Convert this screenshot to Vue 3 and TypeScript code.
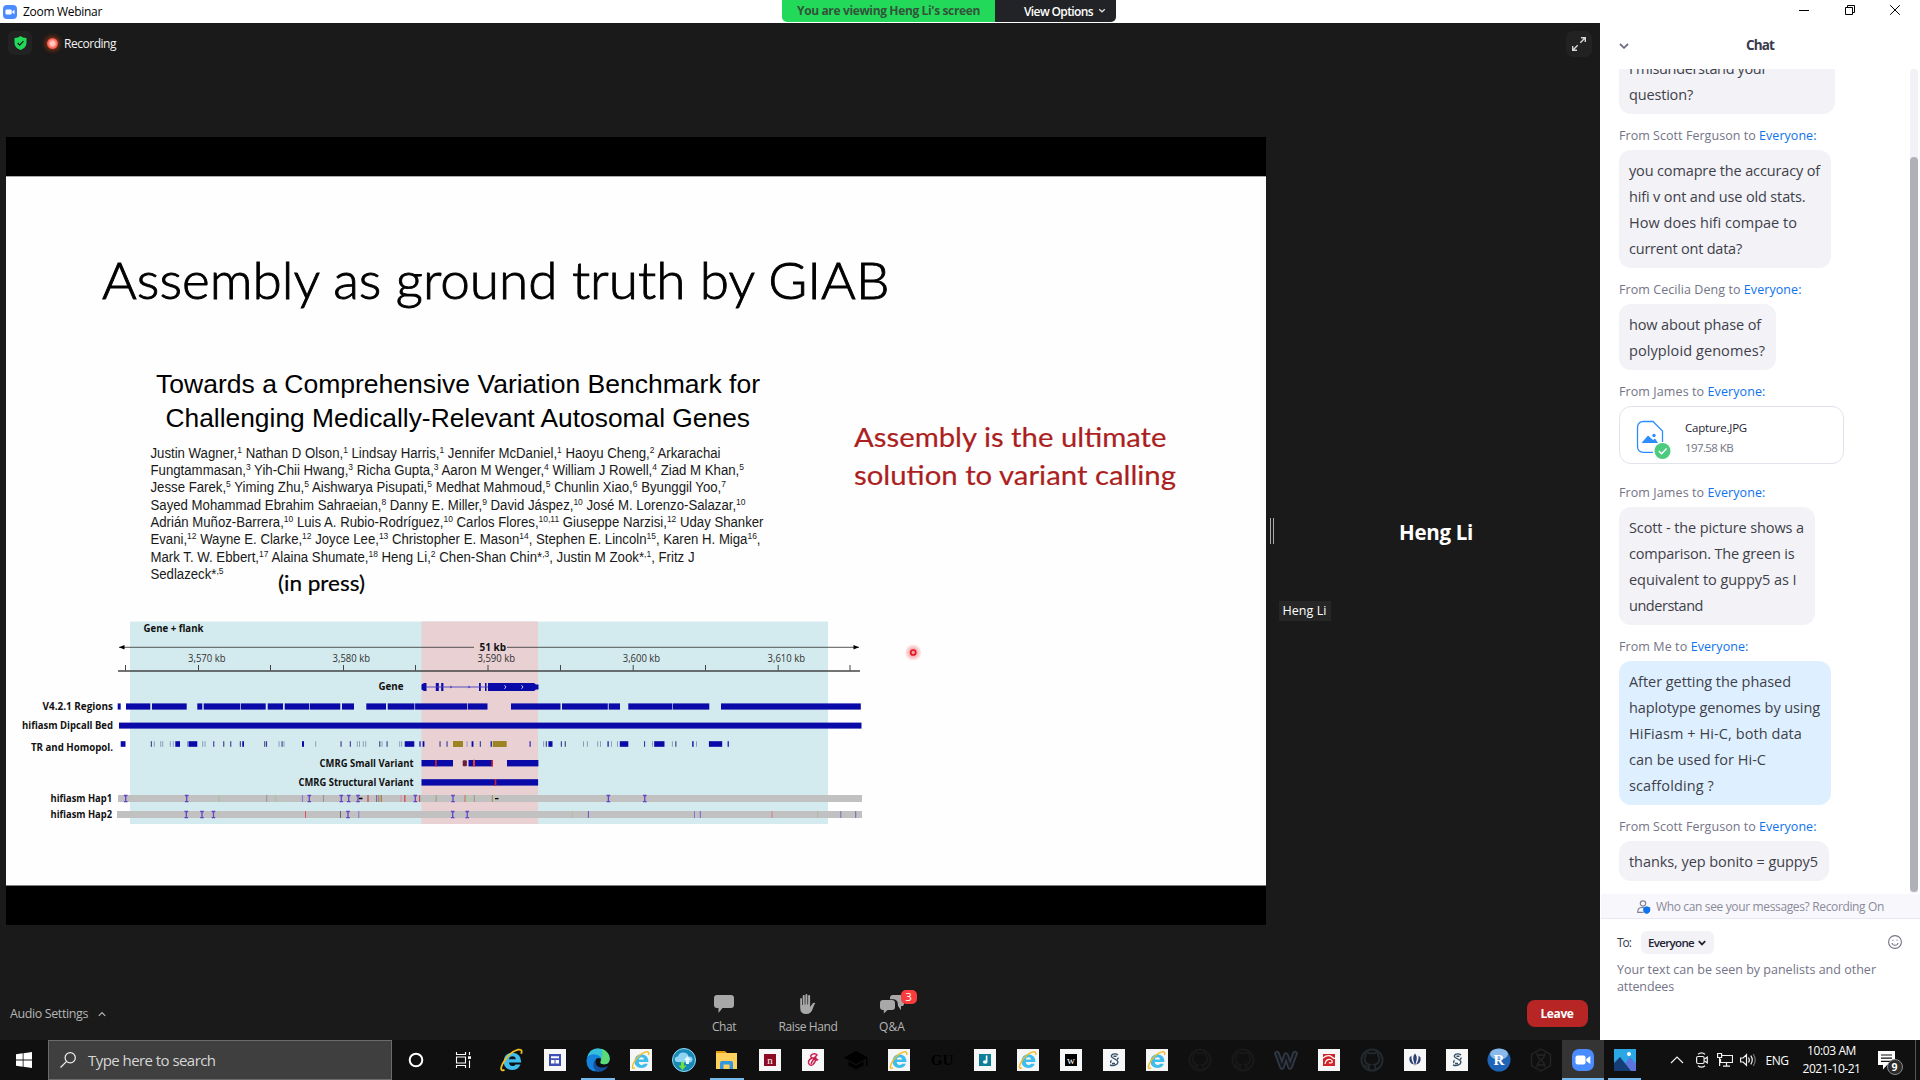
<script setup lang="ts">
interface Message {
  from: string
  fromWidth: number
  lines?: [string, number][]
  width: number
  mine?: boolean
  file?: { name: string; size: string }
}

type Seg = [number, number]

/* Spreads a text run over an exact advance width through letter spacing. */
const vFit = {
  mounted(el: HTMLElement, binding: { value: number }) {
    const count = (el.textContent ?? '').trim().length
    const natural = el.getBoundingClientRect().width
    el.style.letterSpacing = `${(binding.value - natural) / count}px`
  },
}

const messages: Message[] = [
  { from: '', fromWidth: 0, width: 216, lines: [['I misunderstand your', 138], ['question?', 64]] },
  {
    from: 'Scott Ferguson', fromWidth: 197.5, width: 212,
    lines: [['you comapre the accuracy of', 191], ['hifi v ont and use old stats.', 176.5], ['How does hifi compae to', 168], ['current ont data?', 113]],
  },
  { from: 'Cecilia Deng', fromWidth: 182.5, width: 157, lines: [['how about phase of', 132], ['polyploid genomes?', 136]] },
  { from: 'James', fromWidth: 146.5, width: 225, file: { name: 'Capture.JPG', size: '197.58 KB' } },
  {
    from: 'James', fromWidth: 146.5, width: 196,
    lines: [['Scott - the picture shows a', 175], ['comparison. The green is', 165.5], ['equivalent to guppy5 as I', 167.5], ['understand', 74]],
  },
  {
    from: 'Me', fromWidth: 129.5, width: 212, mine: true,
    lines: [['After getting the phased', 162], ['haplotype genomes by using', 191], ['HiFiasm + Hi-C, both data', 173], ['can be used for Hi-C', 137], ['scaffolding ?', 85]],
  },
  { from: 'Scott Ferguson', fromWidth: 197.5, width: 210, lines: [['thanks, yep bonito = guppy5', 189]] },
]

/* Author lines: "^…^" marks a superscript. */
const authors: { y: number; w: number; t: string }[] = [
  { y: 457.7, w: 570, t: 'Justin Wagner,^1^ Nathan D Olson,^1^ Lindsay Harris,^1^ Jennifer McDaniel,^1^ Haoyu Cheng,^2^ Arkarachai' },
  { y: 475, w: 593.5, t: 'Fungtammasan,^3^ Yih-Chii Hwang,^3^ Richa Gupta,^3^ Aaron M Wenger,^4^ William J Rowell,^4^ Ziad M Khan,^5^' },
  { y: 492.3, w: 575.5, t: 'Jesse Farek,^5^ Yiming Zhu,^5^ Aishwarya Pisupati,^5^ Medhat Mahmoud,^5^ Chunlin Xiao,^6^ Byunggil Yoo,^7^' },
  { y: 509.5, w: 595, t: 'Sayed Mohammad Ebrahim Sahraeian,^8^ Danny E. Miller,^9^ David Jáspez,^10^ José M. Lorenzo-Salazar,^10^' },
  { y: 527, w: 613, t: 'Adrián Muñoz-Barrera,^10^ Luis A. Rubio-Rodríguez,^10^ Carlos Flores,^10,11^ Giuseppe Narzisi,^12^ Uday Shanker' },
  { y: 544.3, w: 610, t: 'Evani,^12^ Wayne E. Clarke,^12^ Joyce Lee,^13^ Christopher E. Mason^14^, Stephen E. Lincoln^15^, Karen H. Miga^16^,' },
  { y: 561.7, w: 544, t: 'Mark T. W. Ebbert,^17^ Alaina Shumate,^18^ Heng Li,^2^ Chen-Shan Chin*^,3^, Justin M Zook*^,1^, Fritz J' },
  { y: 578.8, w: 73, t: 'Sedlazeck*^,5^' },
]

interface Run { text: string; sup: boolean; dy: number }
function runs(t: string): Run[] {
  let previous = false
  return t.split('^').map((text, i) => {
    const sup = i % 2 === 1
    const dy = sup === previous ? 0 : sup ? -5 : 5
    previous = sup
    return { text, sup, dy }
  }).filter((r) => r.text !== '')
}

const trackLabels: [string, number, number, number][] = [
  ['Gene + flank', 143.5, 632, 60],
  ['51 kb', 479.5, 650.6, 26.5],
  ['Gene', 378.5, 690, 25],
  ['V4.2.1 Regions', 42.5, 709.8, 70.5],
  ['hifiasm Dipcall Bed', 22, 728.8, 91],
  ['TR and Homopol.', 31, 751, 82],
  ['CMRG Small Variant', 319.5, 767.3, 94],
  ['CMRG Structural Variant', 298.5, 786.4, 115],
  ['hifiasm Hap1', 50.5, 801.6, 61.5],
  ['hifiasm Hap2', 50.5, 818, 61.5],
]
const scaleLabels: [string, number][] = [['3,570 kb', 188], ['3,580 kb', 332.5], ['3,590 kb', 477.5], ['3,600 kb', 622.7], ['3,610 kb', 767.5]]
const ticks = [125.5, 198.5, 270.5, 343.5, 415.5, 488, 560.5, 633.2, 705.5, 778.2, 850]

const regions: Seg[] = [
  [117.7, 120.7], [126, 150.3], [152, 186.7], [197.3, 202.3], [203.7, 240.1], [240.8, 265.7], [267.7, 283], [284.7, 309],
  [309.7, 340.3], [342, 354], [366.3, 386], [387.7, 414.4], [415.1, 467.1], [467.8, 487.5], [511, 560.5], [562, 607.8],
  [608.7, 620], [628.3, 672.3], [672.9, 709.3], [721, 860.8],
]
const repeats: Seg[] = [
  [120.7, 125.5], [175.3, 180], [188.5, 197.3], [242.3, 244], [302, 304], [404.7, 414.3], [419.4, 420.6], [422.6, 424.4],
  [471.6, 473.4], [529.6, 530.6], [548.4, 552.5], [619.8, 628.3], [654.2, 664.5], [692.2, 693.6], [708.9, 722.2], [727.6, 728.8],
  [490.6, 491.8], [607.5, 608.7],
]
const thinRepeats = [
  151.3, 240.3, 213.7, 264.7, 266.5, 350.3, 379.7, 440, 447, 480.3, 546.3, 561.3, 565.2, 644.5, 675.8, 223.7, 230.7, 387, 341, 282,
]
const faintRepeats = [
  154.3, 160.7, 162.7, 170.3, 173.3, 187.5, 202.7, 205, 279, 284, 315.7, 357.3, 359.5, 363.3, 365.7, 382, 399.7, 401.7,
  467, 543.6, 583.5, 587.4, 597.7, 600.5, 611.5, 617.5, 652.5, 672.4, 696.5,
]
const gold: Seg[] = [[453, 463], [492.8, 506.7]]
const smallVariant: Seg[] = [[421.5, 453], [468.5, 492.3], [507, 538.4]]
const insertions1 = [125.7, 186.7, 309.3, 341.3, 348.7, 358, 415.3, 453, 608.4, 644.8]
const insertions2 = [186.3, 202, 213.5, 348, 452.7, 467.2]
const marks1: [number, string][] = [
  [219, '#a5c39c'], [266.7, '#9a9a9a'], [275.5, '#a5c39c'], [302.5, '#8d7bd0'], [323.5, '#969696'], [368, '#d23c50'],
  [376.6, '#9558aa'], [378.8, '#7c9661'], [381.3, '#ad7547'], [401, '#dd91a8'], [404.8, '#d23c50'], [419.6, '#d2505b'],
  [436.2, '#a6a67f'], [465, '#d9717f'], [466.8, '#95df82'], [474.4, '#a1a180'], [492.4, '#aa9b4c'],
]
const marks2: [number, string][] = [
  [218.8, '#acc8a1'], [305.5, '#db5365'], [340.5, '#666'], [358.8, '#8176cf'], [572.5, '#aec0a2'], [588.4, '#6751c4'],
  [694.5, '#8176cf'], [700.3, '#7666c9'], [772, '#d77c8c'], [817.7, '#a9b9a6'], [840.8, '#7d68b9'], [855.7, '#7766b5'],
]

interface Task { kind: string; glyph?: string; fill?: string; state?: 'open' | 'active' }
const tasks: Task[] = [
  { kind: 'ie' }, { kind: 'news' }, { kind: 'edge', state: 'open' }, { kind: 'ie-page' }, { kind: 'cloud' }, { kind: 'folder', state: 'open' },
  { kind: 'letter', glyph: 'n', fill: '#8c0b22' }, { kind: 'script' }, { kind: 'cap' }, { kind: 'ie-page' }, { kind: 'gu' },
  { kind: 'note' }, { kind: 'ie-page' }, { kind: 'letter', glyph: 'w', fill: '#000' }, { kind: 'helix' },
  { kind: 'ie-page' }, { kind: 'cat', fill: '#191919' }, { kind: 'cat', fill: '#191919' }, { kind: 'weebly' }, { kind: 'red' },
  { kind: 'cat', fill: '#24292e' }, { kind: 'lotus' }, { kind: 'helix' }, { kind: 'r' }, { kind: 'hex' },
  { kind: 'zoom', state: 'active' }, { kind: 'photos', state: 'open' },
]
</script>

<template>
  <div class="desktop">
    <header class="titlebar">
      <svg class="app-icon" viewBox="0 0 14 14"><rect width="14" height="14" rx="4" fill="#4a8cff" /><rect x="2.5" y="4.5" width="6.2" height="5" rx="1.2" fill="#fff" /><path d="M9.2 6.4 11.5 4.8v4.4L9.2 7.6z" fill="#fff" /></svg>
      <span v-fit="79" class="app-name">Zoom Webinar</span>
      <div class="window-buttons">
        <svg viewBox="0 0 10 10"><path d="M0 5.5h10" /></svg>
        <svg viewBox="0 0 10 10"><path d="M.5 2.5h7v7h-7zM2.5 2.5v-2h7v7h-2" /></svg>
        <svg viewBox="0 0 10 10"><path d="M.2.2l9.6 9.6M9.8.2.2 9.8" /></svg>
      </div>
      <div class="share-banner">
        <div class="sharing"><span v-fit="183">You are viewing Heng Li's screen</span></div>
        <div class="view-options"><span v-fit="69">View Options</span><svg viewBox="0 0 8 6"><path d="M1.2 1.2 4 3.8l2.8-2.6" /></svg></div>
      </div>
    </header>

    <div class="workspace">
      <main class="meeting">
        <div class="meeting-top">
          <div class="shield">
            <svg viewBox="0 0 12 14"><path d="M6 0c1.6 1.3 3.500 2 6 2v5c0 3.200-2.300 5.500-6 7C2.300 12.500 0 10.200 0 7V2c2.500 0 4.400-.7 6-2z" fill="#23d959" /><path d="m3.200 7 2 2.100 3.700-4" fill="none" stroke="#1a1a1a" stroke-width="1.300" /></svg>
          </div>
          <div class="rec-dot"></div>
          <span v-fit="52" class="rec-text">Recording</span>
          <div class="fullscreen">
            <svg viewBox="0 0 14 14"><path d="M8.300 5.700 13 1M9 .7h4.300V5M5.700 8.300 1 13M5 13.300H.7V9" fill="none" stroke="#d6d6d6" stroke-width="1.400" /></svg>
          </div>
        </div>

        <div class="content">
          <svg class="slide" viewBox="6 137 1260 788" width="1260" height="788">
            <rect x="6" y="137" width="1260" height="788" fill="#000" />
            <rect x="6" y="176" width="1260" height="709.500" fill="#fefefe" />
            <path d="M6 176.500h1260" stroke="#aaa" />
            <text class="lato light" x="102" y="299" font-size="52" textLength="787.500" lengthAdjust="spacingAndGlyphs">Assembly as ground truth by GIAB</text>
            <g class="arial">
              <text x="156" y="392.700" font-size="25.500" textLength="604" lengthAdjust="spacingAndGlyphs">Towards a Comprehensive Variation Benchmark for</text>
              <text x="165.500" y="427.300" font-size="25.500" textLength="584.500" lengthAdjust="spacingAndGlyphs">Challenging Medically-Relevant Autosomal Genes</text>
              <text v-for="a in authors" :key="a.y" x="150.500" :y="a.y" font-size="14" fill="#181818" :textLength="a.w" lengthAdjust="spacingAndGlyphs"><tspan v-for="(r, i) in runs(a.t)" :key="i" :dy="r.dy" :font-size="r.sup ? 9 : 14">{{ r.text }}</tspan></text>
            </g>
            <text class="lato" x="278" y="590.700" font-size="20.500" textLength="87" lengthAdjust="spacingAndGlyphs">(in press)</text>
            <g class="lato red-note" font-size="27.500">
              <text x="854" y="447.300" textLength="312.500" lengthAdjust="spacingAndGlyphs">Assembly is the ultimate</text>
              <text x="854" y="485" textLength="322" lengthAdjust="spacingAndGlyphs">solution to variant calling</text>
            </g>

            <rect x="130" y="621.500" width="698" height="202.500" fill="#d3ebee" />
            <rect x="421.500" y="621.500" width="116.500" height="202.500" fill="#e8d0d3" />
            <g stroke="#444" fill="none">
              <path d="M119 647.300h355M507 647.300h352" stroke-width=".9" />
              <path d="M118 671h742" stroke-width="1.400" />
              <path v-for="t in ticks" :key="t" :d="`M${t} 665v5.500`" stroke-width="1" />
            </g>
            <path d="m119 647.300 5.500-2.200v4.400zM859 647.300l-5.500-2.200v4.400z" fill="#000" />
            <text v-for="l in trackLabels" :key="l[0]" class="track-label" :x="l[1]" :y="l[2]" :textLength="l[3]" lengthAdjust="spacingAndGlyphs">{{ l[0] }}</text>
            <text v-for="l in scaleLabels" :key="l[0]" class="scale-label" :x="l[1]" y="662.300" textLength="37.500" lengthAdjust="spacingAndGlyphs">{{ l[0] }}</text>

            <g fill="#0a0aa8">
              <path d="M421.500 684.500l2.500-1.500h2.500v8H424l-2.500-1.500zM435.800 683h3v8h-3zM441.200 683h2.200v8h-2.200zM479 683h1.800v8H479zM485 683h1.500v8H485zM488 683h46l2 1.500h2.500v5H536l-2 1.500h-46z" />
              <path d="M426 687h62" stroke="#4a3fc0" stroke-width=".9" />
              <path d="m450.300 685.400 2 1.600-2 1.600zM468.500 685.400l2 1.600-2 1.600z" fill="#4a3fc0" />
              <path d="m504.500 685.200 1.500 1.800-1.500 1.800M521.500 685.200l1.500 1.800-1.500 1.800" fill="none" stroke="#c9c9ff" />
              <rect v-for="s in regions" :key="s[0]" :x="s[0]" y="703.400" :width="s[1] - s[0]" height="6.200" />
              <rect x="119" y="722.600" width="742.500" height="6" />
              <rect v-for="s in repeats" :key="s[0]" :x="s[0]" y="741.200" :width="s[1] - s[0]" height="5.600" />
              <rect v-for="x in thinRepeats" :key="x" :x="x - .5" y="741.200" width="1.100" height="5.600" fill="#3a3a8e" />
              <rect v-for="x in faintRepeats" :key="x" :x="x - .5" y="741.200" width="1" height="5.600" fill="#8c9cba" />
              <rect v-for="s in gold" :key="s[0]" :x="s[0]" y="741" :width="s[1] - s[0]" height="6" fill="#9c8424" />
              <rect v-for="s in smallVariant" :key="s[0]" :x="s[0]" y="760" :width="s[1] - s[0]" height="6.400" />
              <rect x="421.500" y="779.200" width="116.600" height="6.400" />
            </g>
            <rect x="462.700" y="760.200" width="4.200" height="6" rx="1" fill="#6a1f3c" />
            <path d="M435.900 760v6.400M492.200 760v6.400M495.500 779v7" stroke="#c92533" stroke-width="1.600" />
            <path d="M474 759.800v7" stroke="#fb4420" stroke-width="1.800" />
            <path d="M118 798.500h744M117 814.400h745" stroke="#c1c1c1" stroke-width="7" />
            <path v-for="m in marks1" :key="m[0]" :d="`M${m[0]} 795v7`" :stroke="m[1]" stroke-width="1.200" />
            <path v-for="m in marks2" :key="m[0]" :d="`M${m[0]} 811v7`" :stroke="m[1]" stroke-width="1" />
            <g fill="none" stroke="#6542c8" stroke-width="1.300">
              <path v-for="x in insertions1" :key="x" :d="`M${x - 1.8} 795.500h3.600M${x} 795.500v6.200M${x - 1.8} 801.700h3.600`" />
              <path v-for="x in insertions2" :key="x" :d="`M${x - 1.8} 811.500h3.600M${x} 811.500v6.200M${x - 1.8} 817.700h3.600`" />
            </g>
            <path d="M359 798.500h3.500M495 798.600h3.500" stroke="#000" stroke-width="1.300" />
            <circle cx="913.200" cy="652.500" r="8" fill="url(#halo)" />
            <circle cx="913.200" cy="652.500" r="2.500" fill="#f4a0a4" stroke="#e01c22" stroke-width="1.700" />
            <defs><radialGradient id="halo"><stop offset=".4" stop-color="#f58a90" stop-opacity=".8" /><stop offset="1" stop-color="#fbc4c6" stop-opacity=".3" /></radialGradient></defs>
          </svg>
          <div class="splitter"></div>
          <div class="speaker">
            <span v-fit="74" class="speaker-name">Heng Li</span>
            <span class="name-tag"><span v-fit="44">Heng Li</span></span>
          </div>
        </div>

        <footer class="controls">
          <div class="audio"><span v-fit="78">Audio Settings</span><svg viewBox="0 0 8 6"><path d="M.8 4.800 4 1.500l3.200 3.300" /></svg></div>
          <div class="control chat-control">
            <svg viewBox="0 0 24 22"><path d="M5 2h14q3 0 3 3v7q0 3-3 3h-8.500L6.500 20v-5H5q-3 0-3-3V5q0-3 3-3z" /></svg>
            <span v-fit="24">Chat</span>
          </div>
          <div class="control hand-control">
            <svg viewBox="0 0 24 22"><path d="M4.200 6q0-1 .9-1t.9 1v6h.7V3q0-1 1-1t1 1v8.500h.7V2q0-1.100 1-1.100t1 1.100v9.500h.7V3q0-1 1-1t1 1v11l2.500-3.500q.9-1.100 2.700-.6-1.200 1.800-2.300 5-1.700 6-6.800 6-6 0-6-6z" /></svg>
            <span v-fit="59">Raise Hand</span>
          </div>
          <div class="control qa-control">
            <svg viewBox="0 0 26 22"><path d="M11 5q0-3 3-3h8q3 0 3 3v5q0 3-1.500 3H22v4.300L19 13q.3-6-4-6.800h-4z" /><path d="M4 7h9q3 0 3 3v4q0 3-3 3H8.500l-3.700 3.500V17H4q-3 0-3-3v-4q0-3 3-3z" /></svg>
            <span v-fit="26">Q&amp;A</span>
            <b class="badge">3</b>
          </div>
          <button class="leave"><span v-fit="33">Leave</span></button>
        </footer>
      </main>

      <aside class="chat">
        <div class="chat-head">
          <svg viewBox="0 0 10 6"><path d="M1 1l4 3.800L9 1" /></svg>
          <b v-fit="28">Chat</b>
        </div>
        <div class="chat-body">
          <div class="list">
            <div v-for="(m, i) in messages" :key="i" class="message">
              <div v-if="m.from" class="from"><span v-fit="m.fromWidth">From {{ m.from }} to <em>Everyone:</em></span></div>
              <div v-if="m.lines" class="bubble" :class="{ mine: m.mine }" :style="{ width: m.width + 'px' }">
                <div v-for="l in m.lines" :key="l[0]" class="line"><span v-fit="l[1]">{{ l[0] }}</span></div>
              </div>
              <div v-if="m.file" class="file">
                <svg viewBox="0 0 36 40">
                  <path d="M18 32.300H8.500q-6 0-6-6V8q0-6.500 6-6.500H18L27.500 11v11" fill="none" stroke="#2d8cff" stroke-width="1.300" />
                  <path d="M6.500 23l6.500-7.500 5 4.500 2-1.500 3 4.500z" fill="#2d8cff" /><circle cx="19" cy="15.500" r="1.700" fill="#2d8cff" />
                  <circle cx="27.500" cy="31" r="8" fill="#4ccb7e" /><path d="m23.700 31 2.900 2.800 5-5.300" fill="none" stroke="#fff" stroke-width="1.400" />
                </svg>
                <div class="file-text"><span v-fit="62" class="file-name">{{ m.file.name }}</span><span v-fit="48" class="file-size">{{ m.file.size }}</span></div>
              </div>
            </div>
          </div>
          <div class="scroll"><div class="thumb"></div></div>
        </div>
        <div class="privacy">
          <svg viewBox="0 0 14 14"><g fill="none" stroke="#828294" stroke-width="1.200"><circle cx="6" cy="3.500" r="2.700" /><path d="M6.500 12.300H.7q0-4.800 4.300-4.800h1.500" /></g><path d="m9.700 6.300 3.500 1.200v2.700q0 2.500-3.500 3.800-3.500-1.300-3.500-3.800V7.500z" fill="#0e72ed" /></svg>
          <span v-fit="228">Who can see your messages? Recording On</span>
        </div>
        <div class="compose">
          <div class="to">
            <span v-fit="14">To:</span>
            <div class="recipient"><span v-fit="46">Everyone</span><svg viewBox="0 0 8 6"><path d="M.8 1.200 4 4.400l3.200-3.200" /></svg></div>
            <svg class="smile" viewBox="0 0 14 14"><circle cx="7" cy="7" r="6.400" /><path d="M4 8q.5 2.300 3 2.300T10 8M4.900 4.800v1M9.100 4.800v1" /></svg>
          </div>
          <div class="placeholder"><span v-fit="259">Your text can be seen by panelists and other</span></div>
          <div class="placeholder"><span v-fit="57">attendees</span></div>
        </div>
      </aside>
    </div>

    <footer class="taskbar">
      <div class="start"><svg viewBox="0 0 16 16"><path d="M0 2.300 6.700 1.300v6.300H0zM7.500 1.200 16 0v7.600H7.500zM0 8.400h6.700v6.300L0 13.700zM7.500 8.400H16V16l-8.500-1.200z" fill="#fff" /></svg></div>
      <div class="search"><svg viewBox="0 0 16 16"><circle cx="10.200" cy="5.800" r="5.100" /><path d="M6.600 9.400.5 15.500" /></svg><span v-fit="127.500">Type here to search</span></div>
      <div class="system-button"><svg viewBox="0 0 16 16"><circle cx="8" cy="8" r="6.300" fill="none" stroke="#fff" stroke-width="2" /></svg></div>
      <div class="system-button view"><svg viewBox="0 0 18 16"><path d="M1.500 0v2.500h9V0M1.500 5h9v6h-9zM1.500 16v-2.500h9V16M14.500 0v3M14.500 8.500V16" fill="none" stroke="#fff" stroke-width="1.100" /><path d="M13 4.300h3v2.600h-3z" fill="#fff" /></svg></div>
      <div class="tasks">
        <div v-for="(t, i) in tasks" :key="i" class="task" :class="t.state">
          <svg viewBox="0 0 24 24">
            <template v-if="t.kind === 'ie' || t.kind === 'ie-page'">
              <rect v-if="t.kind === 'ie-page'" x="1" y="1" width="22" height="22" fill="#f6f6f6" />
              <g :transform="t.kind === 'ie' ? '' : 'translate(2.500 2.500) scale(.8)'">
                <path d="M20.500 16.500Q18 22 12.300 22 4 21.500 3.600 13.500 4 5 12.500 4.700q8.700.5 8.700 9.800H9q.4 3.500 3.600 3.600 2.200 0 3-1.600zM9 11.200h6.800q-.3-2.800-3.300-2.900-3 .1-3.500 2.900z" fill="#3fbdec" />
                <path d="M4.500 21.800Q-1 24 2.500 16 8.500 4.500 18 1.700q5-.8 3.200 4" fill="none" stroke="#f2be25" stroke-width="1.800" />
              </g>
            </template>
            <template v-else-if="t.kind === 'edge'">
              <path d="M1 10Q3 .5 12 .3 23 1 23.700 11q-.3 5.300-5.700 5.300-4.500-.3-3.300-2.800Q16 9 11 7.500 5 6.500 1 10z" fill="#35bfdc" />
              <path d="M15.500.8q7.700 2.700 8.200 10.200-.3 5.300-5.700 5.300-4.500-.3-3.300-2.800Q17.500 7 15.500.8z" fill="#5bdb76" />
              <path d="M.4 13Q.5 6 8 6.200q6 .3 6.500 4.300-3.500-1.500-5 1.500-1.500 6 3.500 11.500Q1 24.500.4 13z" fill="#1583dc" />
              <path d="M9.500 12q-1 5 3.500 7 4.500 1.500 9-1-3.500 6-9.500 5.800Q6 21.500 7.500 15q.5-2 2-3z" fill="#14509f" />
            </template>
            <template v-else-if="t.kind === 'cloud'">
              <circle cx="12" cy="12" r="11.500" fill="#1888b7" stroke="#8fdcf6" />
              <path d="M5 14q-3-1-2-4 1-2 3-1.500Q7 4 12 4.500q4 .5 4.500 4 4-.5 4 3t-4 3z" fill="#8fd5f2" /><path d="m15.500 8 3.500 4h-2v4h-3v-4h-2z" fill="#e4f8ff" /><path d="M9 14h3v3.500h2.500L10.500 22l-4-4.500H9z" fill="#6fe03c" />
            </template>
            <template v-else-if="t.kind === 'folder'"><path d="M1 3h9l2 2v5H1z" fill="#e39c09" /><path d="M1 5h21v16H1z" fill="#ffd15c" /><path d="M5 21v-6q0-2 2-2h9q2 0 2 2v6h-3.500v-4.500h-6V21z" fill="#3297dd" /></template>
            <template v-else-if="t.kind === 'zoom'"><rect x="1" y="1" width="22" height="22" rx="7" fill="#4a8cff" /><rect x="4.500" y="7.500" width="10" height="9" rx="2" fill="#fff" /><path d="m15.300 11 4-3v8l-4-3z" fill="#fff" /></template>
            <template v-else-if="t.kind === 'photos'"><path d="M1 1h22v22H1z" fill="#2aa7e4" /><path d="m6 23 11-14 6 7v7z" fill="#5d74df" /><path d="m1 15 6-6 11 14H1z" fill="#153e77" /><circle cx="16" cy="6" r="2" fill="#fff" /></template>
            <template v-else-if="t.kind === 'r'"><circle cx="12" cy="12" r="11.500" fill="#1f65b7" /><ellipse cx="12" cy="6" rx="9" ry="5.500" fill="#a4cff6" opacity=".8" /><text x="12" y="17" class="serif" font-size="15" font-weight="700" fill="#fff">R</text></template>
            <template v-else-if="t.kind === 'cat'"><circle cx="12" cy="12" r="10.500" fill="none" :stroke="t.fill" stroke-width="2" /><path d="M9 22.500v-4q-3.200.5-4.200-2M15.300 22.500V19q0-1.700-1-2.300 5-.8 5-5.700 0-2-1.300-3.500.5-1.800-.2-3.300-1.600 0-3.500 1.300-2.400-.6-4.800 0Q7.700 4.200 6 4.200q-.6 1.500-.1 3.300Q4.700 9 4.700 11q0 5 5 5.700-.8.700-.8 2" fill="none" :stroke="t.fill" stroke-width="1.800" /></template>
            <template v-else-if="t.kind === 'cap'"><path d="M12 3 24 9.500 12 16 0 9.500zM4.500 13.500 12 17.500l7.500-4v4L12 21.500l-7.500-4zM22 10h1.500v8H22z" fill="#000" /></template>
            <text v-else-if="t.kind === 'gu'" x="12" y="17" class="serif" font-size="15" font-weight="700" fill="#000">GU</text>
            <template v-else-if="t.kind === 'weebly'"><path d="M3 5.500 8 19l4-12 4 12 5-13.500" fill="none" stroke="#303a46" stroke-width="5.500" stroke-linejoin="round" stroke-linecap="round" /><path d="M3 5.500 8 19l4-12 4 12 5-13.500" fill="none" stroke="#14171b" stroke-width="2" stroke-linejoin="round" stroke-linecap="round" /></template>
            <path v-else-if="t.kind === 'hex'" d="m12 1 9.500 5.500v11L12 23l-9.500-5.500v-11zM8 5q0 4 4 7t4 7M16 5q0 4-4 7t-4 7M9 7h6M9 17h6" fill="none" stroke="#252525" stroke-width="1.400" />
            <template v-else>
              <rect x="1" y="1" width="22" height="22" fill="#f7f7f7" />
              <template v-if="t.kind === 'letter'"><rect x="6" y="6" width="12" height="12" :fill="t.fill" /><text x="12" y="15.500" class="serif" font-size="11" fill="#fff">{{ t.glyph }}</text></template>
              <template v-else-if="t.kind === 'note'"><rect x="6" y="6" width="12" height="12" fill="#0d7f99" /><path d="M12.800 7.500h1.600v6.300h-1.600z" fill="#fff" /><ellipse cx="12.200" cy="14" rx="2.300" ry="1.800" fill="#fff" /></template>
              <template v-else-if="t.kind === 'news'"><rect x="6" y="6" width="12" height="12" fill="#3f51b5" /><path d="M8 8.300h8v2H8zM8 12h3.500v3.500H8zM12.500 12H16v3.500h-3.500z" fill="#fff" /></template>
              <path v-else-if="t.kind === 'script'" d="M16.500 7.500q-2-2.500-5-1.300-3.500 2.300-.3 3.800 3.300 0 4.800-3.500M11.200 10q-4 1.500-3.700 5 1.500 3.500 4.500 1.500 3-3 2.500-6.500-3 1.500-4.500 6M15 9.500q.5 4.500 2 1.500" fill="none" stroke="#c9204f" stroke-width="1.400" />
              <path v-else-if="t.kind === 'helix'" d="M16 7q-2-1.700-5-.8-2.800 1.500-.8 3.300l4.300 2.500q2.500 1.800.500 4-3 2.500-7 1M9.500 12.300q-1.500 1.200-.5 2.700M15.200 11.500q1.200-1 .8-2M11.500 8.300h3M10 15.500h3" fill="none" stroke="#33506a" stroke-width="1.400" />
              <template v-else-if="t.kind === 'red'"><rect x="6" y="6" width="12" height="12" fill="#cf2528" /><path d="M6 10q5-4 9-1 2 2 3 1M8 16q1-5 5-4.500 3 .500 2 3-2 1-3 0" fill="none" stroke="#fff" stroke-width="1.200" /></template>
              <path v-else d="M12 5.500q2.500 3 1.500 7L12 18l-1.500-5.500q-1-4 1.500-7zM8.500 7.500q-.5 5 2.500 9-5.500-1-4.500-7zM15.500 7.500q.5 5-2.500 9 5.500-1 4.500-7z" fill="#2c3f75" />
            </template>
          </svg>
        </div>
      </div>
      <div class="tray">
        <svg class="t1" viewBox="0 0 14 16"><path d="m1 11 6-6 6 6" /></svg>
        <svg class="t2" viewBox="0 0 12 16"><rect x=".6" y="4.500" width="7.500" height="7" rx="1.500" /><path d="m8.500 7 2.800-1.800v5.600L8.500 9M2 2.300Q5.500-.5 9 2.300M2 13.700q3.500 2.800 7 0" /></svg>
        <svg class="t3" viewBox="0 0 16 16"><path d="M5 3.500h10.500v7H3.500V7M9.500 10.500V14M6 14.200h7M.6 1.500h4v4h-4zM2.600 5.500V14" /></svg>
        <svg class="t4" viewBox="0 0 16 16"><path d="M.6 6h2.500L6.500 2.700v10.600L3.100 10H.6zM8.500 5.500q1.700 2.500 0 5M10.800 3.700q2.900 4.300 0 8.600" /><path d="M13.200 2q4 6 0 12" opacity=".45" /></svg>
        <span v-fit="23" class="lang">ENG</span>
        <div class="clock"><div><span v-fit="49">10:03 AM</span></div><div><span v-fit="58">2021-10-21</span></div></div>
        <div class="notes"><svg viewBox="0 0 18 19"><path d="M0 0h17v14H9l-4 4.500V14H0z" fill="#fff" /><path d="M3 4h11M3 7.200h11M3 10.400h11" stroke="#111" stroke-width="1.200" /></svg><b>9</b></div>
        <i class="peek"></i>
      </div>
    </footer>
  </div>
</template>

<style>
html, body { margin: 0; overflow: hidden; }
</style>

<style scoped>
* { box-sizing: border-box; }
.desktop { width: 1920px; height: 1080px; display: flex; flex-direction: column; font-family: "Open Sans", "Noto Sans", sans-serif; background: #1a1a1a; overflow: hidden; }
.desktop span { white-space: nowrap; }
svg { display: block; flex: none; }

.titlebar { position: relative; height: 23px; flex: none; background: #fff; display: flex; align-items: center; padding-left: 3px; }
.app-icon { width: 14px; height: 14px; margin-right: 6px; }
.app-name { font-size: 12px; line-height: 22px; color: #000; }
.window-buttons { margin-left: auto; display: flex; gap: 35.500px; padding-right: 20px; margin-top: -3px; }
.window-buttons svg { width: 10px; height: 10px; fill: none; stroke: #000; stroke-width: 1; }
.share-banner { position: absolute; left: 782px; top: 0; width: 334px; height: 22px; display: flex; border-radius: 0 0 5px 5px; overflow: hidden; font-weight: 600; font-size: 12px; line-height: 21px; }
.sharing { width: 213px; background: #23d959; color: #33533c; padding-left: 15px; font-weight: 700; }
.view-options { flex: 1; background: #222326; color: #fff; display: flex; align-items: center; padding-left: 29px; gap: 5px; }
.view-options svg { width: 8px; height: 6px; fill: none; stroke: #ddd; stroke-width: 1.300; }

.workspace { height: 1017px; flex: none; display: flex; }
.meeting { width: 1600px; display: flex; flex-direction: column; background: #1a1a1a; }
.meeting-top { height: 114px; padding: 8px 8px 0; display: flex; align-items: flex-start; }
.shield { width: 24px; height: 24px; border-radius: 6px; background: #222; display: grid; place-items: center; }
.shield svg { width: 13px; height: 14px; }
.rec-dot { width: 11px; height: 11px; margin: 7px 0 0 14.500px; border-radius: 50%; background: radial-gradient(circle at 50% 50%, #ffc9c0 0 25%, #ff5c4d 60%); box-shadow: 0 0 4px 2px #7d3014; }
.rec-text { font-size: 12px; line-height: 25px; color: #f2f2f2; margin-left: 6.500px; }
.fullscreen { width: 26px; height: 26px; border-radius: 7px; background: #222; margin-left: auto; display: grid; place-items: center; }
.fullscreen svg { width: 14px; height: 14px; }

.content { height: 788px; flex: none; display: flex; padding-left: 6px; }
.lato { font-family: Lato, sans-serif; stroke: #000; stroke-width: .2px; }
.light { font-weight: 300; stroke-width: .9px; }
.red-note { fill: #ac1f1f; stroke: #ac1f1f; }
.arial { font-family: "Liberation Sans", Arial, sans-serif; }
.track-label { font: 700 11px "Open Sans", sans-serif; fill: #111; }
.scale-label { font: 400 11px "Open Sans", sans-serif; fill: #333; }
.splitter { width: 4px; height: 26px; margin: 381px 0 0 4px; border-left: 1px solid #aaa; border-right: 1px solid #aaa; }
.speaker { width: 326px; display: flex; flex-direction: column; }
.speaker-name { font-size: 20.500px; font-weight: 700; line-height: 30px; color: #fff; margin: 380px 0 0 125px; align-self: flex-start; }
.name-tag { align-self: flex-start; margin: 53.500px 0 0 4.500px; width: 52px; height: 20px; background: #262626; color: #fff; font-size: 12.500px; line-height: 19px; padding-left: 4px; }

.controls { flex: 1; display: flex; align-items: flex-start; padding-top: 64px; color: #b5b5b5; font-size: 12px; }
.audio { width: 98px; margin: 14px 0 0 10px; display: flex; align-items: center; gap: 10px; line-height: 21px; font-size: 12.500px; }
.audio svg { width: 8px; height: 6px; fill: none; stroke: #b5b5b5; stroke-width: 1.200; }
.control { position: relative; width: 84px; display: flex; flex-direction: column; align-items: center; line-height: 16px; }
.control svg { width: 24px; height: 22px; fill: #a8a8a8; margin: 4px 0 4px; }
.chat-control { margin-left: 574px; }
.qa-control svg { width: 26px; }
.badge { position: absolute; left: 50.500px; top: 1px; width: 16px; height: 14px; border-radius: 5px; background: #fa3c3c; color: #fff; font-size: 11.500px; line-height: 14px; text-align: center; font-weight: 400; }
.leave { margin: 11px 12px 0 auto; width: 61px; height: 27px; border: 0; border-radius: 8px; background: #b72525; color: #fff; font: 700 12px/25px "Open Sans", sans-serif; padding: 0 1px 1px 0; }

.chat { width: 320px; background: #fff; display: flex; flex-direction: column; }
.chat-head { height: 46px; display: flex; align-items: center; padding-left: 19px; color: #39394d; }
.chat-head svg { width: 10px; height: 6px; fill: none; stroke: #6e6e80; stroke-width: 1.800; }
.chat-head b { font-size: 13.500px; line-height: 44px; height: 46px; margin-left: 117px; }
.chat-body { height: 825px; flex: none; display: flex; overflow: hidden; }
.list { width: 310px; padding-left: 19px; margin-top: -21px; }
.from { height: 36px; padding-top: 12px; font-size: 12.500px; line-height: 20px; color: #747487; }
.from em { font-style: normal; color: #0e72ed; }
.bubble { background: #f2f2f7; border-radius: 12px; padding: 7px 10px; color: #3f3f4a; }
.bubble.mine { background: #def0ff; }
.line { font-size: 14.500px; line-height: 28px; height: 26px; }
.file { width: 225px; height: 58px; border: 1px solid #e2e2ec; border-radius: 12px; display: flex; margin-bottom: 7px; padding: 13px 0 0 15px; }
.file svg { width: 36px; height: 40px; }
.file-text { display: flex; flex-direction: column; align-items: flex-start; margin: -2px 0 0 14px; font-size: 11.500px; line-height: 20px; color: #232333; }
.file-size { color: #747487; }
.scroll { width: 8px; background: #f1f1f6; border-radius: 4px 4px 0 0; height: 824px; padding-top: 88px; }
.thumb { height: 735px; border-radius: 4px; background: #b0b0b9; }
.privacy { margin-left: 1px; height: 25px; background: #f7f7fc; border-bottom: 1px solid #e8e8f5; display: flex; align-items: center; padding-left: 36px; gap: 5px; font-size: 12px; color: #8b8b9a; line-height: 24px; }
.privacy span { padding-top: 2px; }
.privacy svg { width: 14px; height: 14px; margin-top: 2px; }
.compose { padding: 12px 18px 0 17px; }
.to { display: flex; align-items: center; height: 23px; font-size: 12px; color: #39394d; line-height: 21px; margin-bottom: 7px; }
.to > span, .recipient span { padding-bottom: 1px; }
.recipient { width: 73px; height: 23px; margin-left: 10px; background: #f2f2f7; border-radius: 6px; padding-left: 7px; display: flex; align-items: center; gap: 4px; font-weight: 600; font-size: 11.500px; color: #232333; }
.recipient svg { width: 8px; height: 6px; fill: none; stroke: #232333; stroke-width: 1.800; }
.smile { width: 14px; height: 14px; margin: 0 0 1px auto; fill: none; stroke: #747487; stroke-width: 1.100; }
.placeholder { font-size: 12.500px; line-height: 17px; height: 17px; color: #747487; }

.taskbar { height: 40px; flex: none; background: #101010; display: flex; align-items: center; color: #fff; }
.start { width: 48px; padding-left: 16px; }
.start svg { width: 16px; height: 16px; }
.search { width: 344px; height: 40px; background: #3f3f3f; border: 1px solid #6b6b6b; display: flex; align-items: center; padding-left: 11px; gap: 12px; font-size: 15px; color: #d6d6d6; line-height: 38px; }
.search svg { width: 16px; height: 16px; fill: none; stroke: #f0f0f0; stroke-width: 1.200; }
.system-button { width: 48px; display: flex; justify-content: center; }
.system-button svg { width: 16px; height: 16px; }
.view { width: 47.500px; }
.view svg { width: 18px; }
.tasks { width: 1155px; height: 40px; margin-left: 3px; display: grid; grid-template-columns: repeat(21, 43px) repeat(6, 42px); flex: none; }
.task { display: grid; place-items: center; position: relative; }
.task svg { width: 24px; height: 24px; }
.open::after, .active::after { content: ""; position: absolute; left: 4.500px; right: 4.500px; bottom: 0; height: 2px; background: #76b9ed; }
.active { background: #343434; }
.active::after { left: 0; right: 0; }
.serif { font-family: "Liberation Serif", serif; text-anchor: middle; }
.tray { flex: 1; display: flex; align-items: center; height: 40px; padding-left: 24px; font-size: 12px; }
.tray > svg { height: 16px; fill: none; stroke: #f0f0f0; stroke-width: 1.200; }
.t1 { width: 14px; }
.t2 { width: 12px; margin-left: 12px; }
.t3 { width: 16px; margin-left: 9px; }
.t4 { width: 16px; margin-left: 7.500px; }
.lang { margin-left: 9.500px; line-height: 39px; }
.clock { width: 76px; margin-left: 5px; text-align: center; line-height: 18px; padding-bottom: 1px; }
.notes { position: relative; margin-left: 8px; }
.notes svg { width: 18px; height: 19px; }
.notes b { position: absolute; left: 9px; top: 8px; width: 16px; height: 16px; border-radius: 50%; background: #2b2b2b; border: 1px solid #8a8a8a; font-size: 10.500px; line-height: 14px; text-align: center; }
.peek { width: 1px; height: 40px; background: #555; margin-left: auto; margin-right: 4px; }
</style>
